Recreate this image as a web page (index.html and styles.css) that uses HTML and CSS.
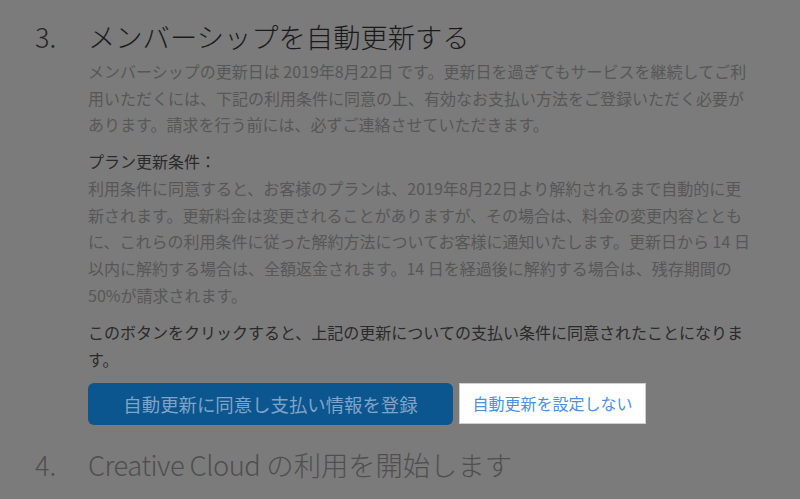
FILE: index.html
```html
<!DOCTYPE html>
<html lang="ja">
<head>
<meta charset="utf-8">
<link rel="stylesheet" href="styles.css">
</head>
<body>
<main class="steps">
  <section class="step">
    <div class="step-num">3.</div>
    <div class="step-body">
      <h2 class="step-title">メンバーシップを自動更新する</h2>
      <p class="text">メンバーシップの更新日は 2019年8月22日 です。更新日を過ぎてもサービスを継続してご利用いただくには、下記の利用条件に同意の上、有効なお支払い方法をご登録いただく必要があります。請求を行う前には、必ずご連絡させていただきます。</p>
      <p class="text terms"><span class="terms-label">プラン更新条件：</span><br>利用条件に同意すると、お客様のプランは、2019年8月22日より解約されるまで自動的に更新されます。更新料金は変更されることがありますが、その場合は、料金の変更内容とともに、これらの利用条件に従った解約方法についてお客様に通知いたします。更新日から 14 日以内に解約する場合は、全額返金されます。14 日を経過後に解約する場合は、残存期間の50%が請求されます。</p>
      <p class="text notice">このボタンをクリックすると、上記の更新についての支払い条件に同意されたことになります。</p>
      <div class="actions">
        <button class="btn btn-primary">自動更新に同意し支払い情報を登録</button>
        <button class="btn btn-link">自動更新を設定しない</button>
      </div>
    </div>
  </section>
  <section class="step step-next">
    <div class="step-num">4.</div>
    <div class="step-body">
      <h2 class="step-title"><span class="latin">Creative Cloud</span> の利用を開始します</h2>
    </div>
  </section>
</main>
</body>
</html>
```

FILE: styles.css
```css
html, body {
  margin: 0;
  padding: 0;
  background: #7b7b7b;
  height: 100%;
  overflow: hidden;
}
body {
  font-family: "Noto Sans CJK JP", "Noto Sans", sans-serif;
  color: #575757;
}
.steps {
  padding: 19px 0 0 35px;
}
.step {
  display: flex;
}
.step-num {
  width: 53px;
  flex: none;
  font-size: 27px;
  line-height: 35px;
  font-weight: 300;
  color: #262626;
}
.step-body {
  width: 668px;
}
.step-title {
  margin: 0 0 4px;
  font-size: 27.3px;
  line-height: 35px;
  font-weight: 300;
  color: #1a1a1a;
}
.latin {
  letter-spacing: -0.5px;
}
.text {
  margin: 0 0 10px;
  font-size: 16px;
  line-height: 26.7px;
}
.terms-label {
  color: #2a2a2a;
}
.terms {
  margin-bottom: 11px;
}
.notice {
  color: #2a2a2a;
}
.actions {
  display: flex;
  gap: 6px;
}
.btn {
  font-family: inherit;
  height: 42px;
  box-sizing: border-box;
  cursor: pointer;
}
.btn-primary {
  width: 365px;
  background: #0b568f;
  color: #80a3c8;
  font-size: 18.4px;
  border: none;
  border-radius: 6px;
  padding: 0;
}
.btn-link {
  width: 187px;
  height: 41px;
  background: #ffffff;
  border: 1px solid #cfcfcf;
  border-radius: 0;
  color: #4a90e2;
  font-size: 16px;
  padding: 0 12px;
}
.step-next {
  margin-top: 22px;
}
.step-next .step-num {
  color: #4f4f4f;
}
.step-next .step-title {
  color: #4f4f4f;
}
```
